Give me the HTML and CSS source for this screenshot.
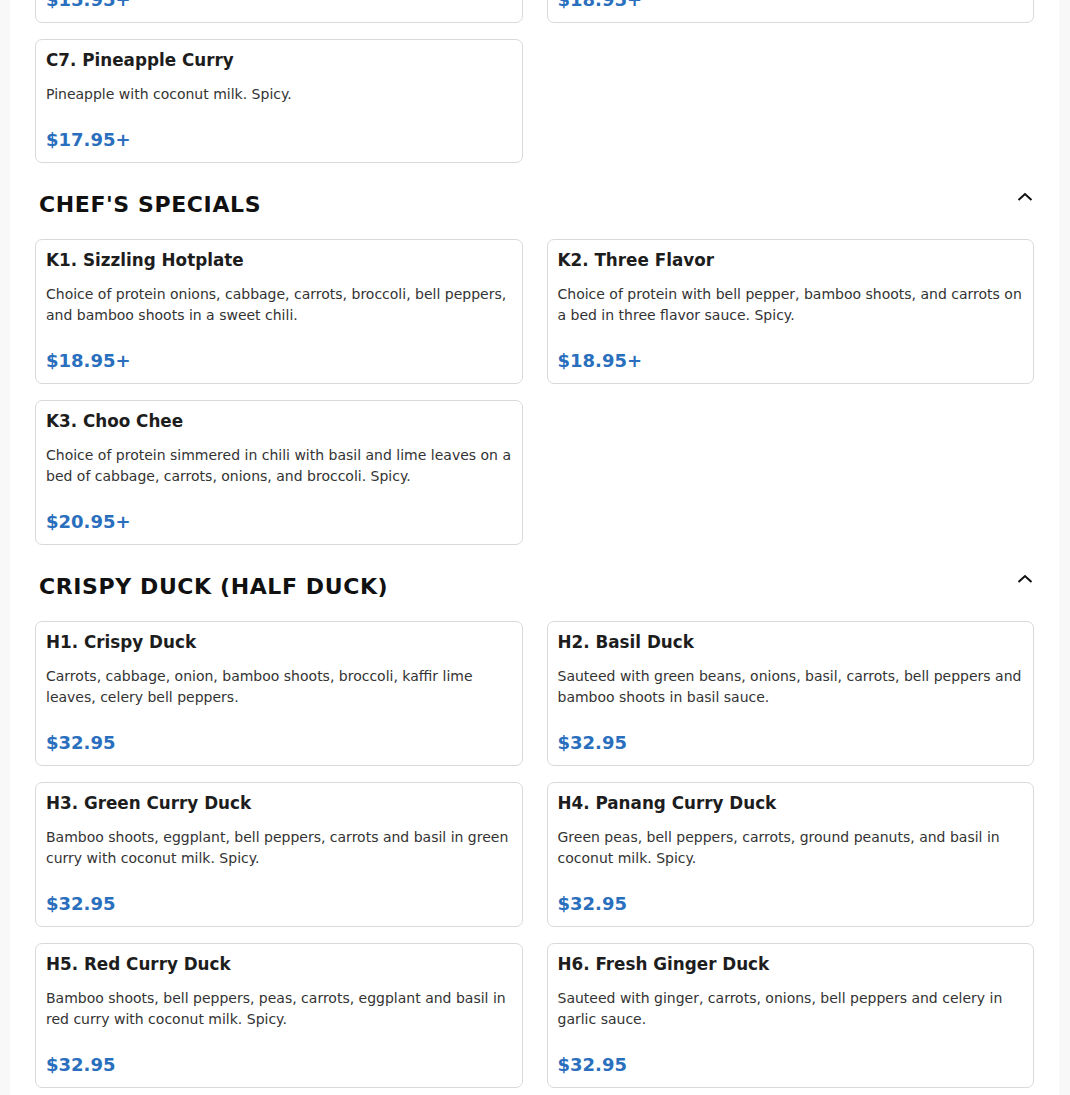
FILE: index.html
```html
<!DOCTYPE html>
<html lang="en">
<head>
    <meta charset="UTF-8">
    <meta name="viewport" content="width=device-width, initial-scale=1.0">
    <title>Menu</title>
    <link rel="stylesheet" href="styles.css">
</head>
<body>
    <main class="page">
        <!-- page is scrolled: curries section continues from above -->
        <section class="menu-section scrolled-top">
            <div class="item-grid">
                <div class="item-card">
                    <h3>C5. Massaman Curry</h3>
                    <p class="desc">Potatoes, onions, carrots and peanuts in massaman curry with coconut milk.</p>
                    <p class="price">$15.95+</p>
                </div>
                <div class="item-card">
                    <h3>C6. Jungle Curry</h3>
                    <p class="desc">Mixed vegetables and basil in a clear spicy curry broth. Spicy.</p>
                    <p class="price">$18.95+</p>
                </div>
                <div class="item-card">
                    <h3>C7. Pineapple Curry</h3>
                    <p class="desc">Pineapple with coconut milk. Spicy.</p>
                    <p class="price">$17.95+</p>
                </div>
            </div>
        </section>

        <section class="menu-section">
            <div class="section-header">
                <h2>CHEF'S SPECIALS</h2>
                <button class="toggle" aria-label="Collapse">
                    <svg width="16" height="16" viewBox="0 0 16 16"><polyline points="1.5,10 8,4 14.5,10" fill="none" stroke="#111" stroke-width="2"/></svg>
                </button>
            </div>
            <div class="item-grid">
                <div class="item-card">
                    <h3>K1. Sizzling Hotplate</h3>
                    <p class="desc">Choice of protein onions, cabbage, carrots, broccoli, bell peppers, and bamboo shoots in a sweet chili.</p>
                    <p class="price">$18.95+</p>
                </div>
                <div class="item-card">
                    <h3>K2. Three Flavor</h3>
                    <p class="desc">Choice of protein with bell pepper, bamboo shoots, and carrots on a bed in three flavor sauce. Spicy.</p>
                    <p class="price">$18.95+</p>
                </div>
                <div class="item-card">
                    <h3>K3. Choo Chee</h3>
                    <p class="desc">Choice of protein simmered in chili with basil and lime leaves on a bed of cabbage, carrots, onions, and broccoli. Spicy.</p>
                    <p class="price">$20.95+</p>
                </div>
            </div>
        </section>

        <section class="menu-section">
            <div class="section-header">
                <h2>CRISPY DUCK (HALF DUCK)</h2>
                <button class="toggle" aria-label="Collapse">
                    <svg width="16" height="16" viewBox="0 0 16 16"><polyline points="1.5,10 8,4 14.5,10" fill="none" stroke="#111" stroke-width="2"/></svg>
                </button>
            </div>
            <div class="item-grid">
                <div class="item-card">
                    <h3>H1. Crispy Duck</h3>
                    <p class="desc">Carrots, cabbage, onion, bamboo shoots, broccoli, kaffir lime leaves, celery bell peppers.</p>
                    <p class="price">$32.95</p>
                </div>
                <div class="item-card">
                    <h3>H2. Basil Duck</h3>
                    <p class="desc">Sauteed with green beans, onions, basil, carrots, bell peppers and bamboo shoots in basil sauce.</p>
                    <p class="price">$32.95</p>
                </div>
                <div class="item-card">
                    <h3>H3. Green Curry Duck</h3>
                    <p class="desc">Bamboo shoots, eggplant, bell peppers, carrots and basil in green curry with coconut milk. Spicy.</p>
                    <p class="price">$32.95</p>
                </div>
                <div class="item-card">
                    <h3>H4. Panang Curry Duck</h3>
                    <p class="desc">Green peas, bell peppers, carrots, ground peanuts, and basil in coconut milk. Spicy.</p>
                    <p class="price">$32.95</p>
                </div>
                <div class="item-card">
                    <h3>H5. Red Curry Duck</h3>
                    <p class="desc">Bamboo shoots, bell peppers, peas, carrots, eggplant and basil in red curry with coconut milk. Spicy.</p>
                    <p class="price">$32.95</p>
                </div>
                <div class="item-card">
                    <h3>H6. Fresh Ginger Duck</h3>
                    <p class="desc">Sauteed with ginger, carrots, onions, bell peppers and celery in garlic sauce.</p>
                    <p class="price">$32.95</p>
                </div>
            </div>
        </section>
    </main>
</body>
</html>
```

FILE: styles.css
```css
:root {
    --page-bg: #f8f8f8;
    --card-border: #d9d9d9;
    --text-color: #333;
    --title-color: #1d1d1d;
    --price-color: #2a6fbd;
}

* {
    margin: 0;
    padding: 0;
    box-sizing: border-box;
}

body {
    font-family: 'DejaVu Sans', sans-serif;
    background-color: var(--page-bg);
    color: var(--text-color);
    overflow: hidden;
}

.page {
    background-color: #fff;
    margin: 0 11px 0 10px;
    padding: 0 25px 40px;
}

.menu-section {
    margin-top: 28px;
}

.menu-section.scrolled-top {
    margin-top: -122px;
}

.section-header {
    display: flex;
    justify-content: space-between;
    align-items: flex-start;
    padding: 0 1px 0 4px;
    margin-bottom: 21px;
}

.section-header h2 {
    font-size: 22px;
    line-height: 27px;
    letter-spacing: 0.6px;
    font-weight: bold;
    color: #111;
}

.toggle {
    background: none;
    border: none;
    cursor: pointer;
    display: flex;
    margin-top: -1px;
}

.item-grid {
    display: grid;
    grid-template-columns: 1fr 1fr;
    column-gap: 24px;
    row-gap: 16px;
}

.item-card {
    border: 1px solid var(--card-border);
    border-radius: 7px;
    padding: 9px 10px 11px;
    display: flex;
    flex-direction: column;
}

.item-card h3 {
    font-size: 16.8px;
    line-height: 22px;
    font-weight: bold;
    color: var(--title-color);
    margin-bottom: 13px;
}

.desc {
    font-size: 14px;
    line-height: 21px;
    color: var(--text-color);
    flex: 1;
}

.price {
    font-size: 18px;
    line-height: 22px;
    font-weight: bold;
    color: var(--price-color);
    margin-top: 24px;
}
```
